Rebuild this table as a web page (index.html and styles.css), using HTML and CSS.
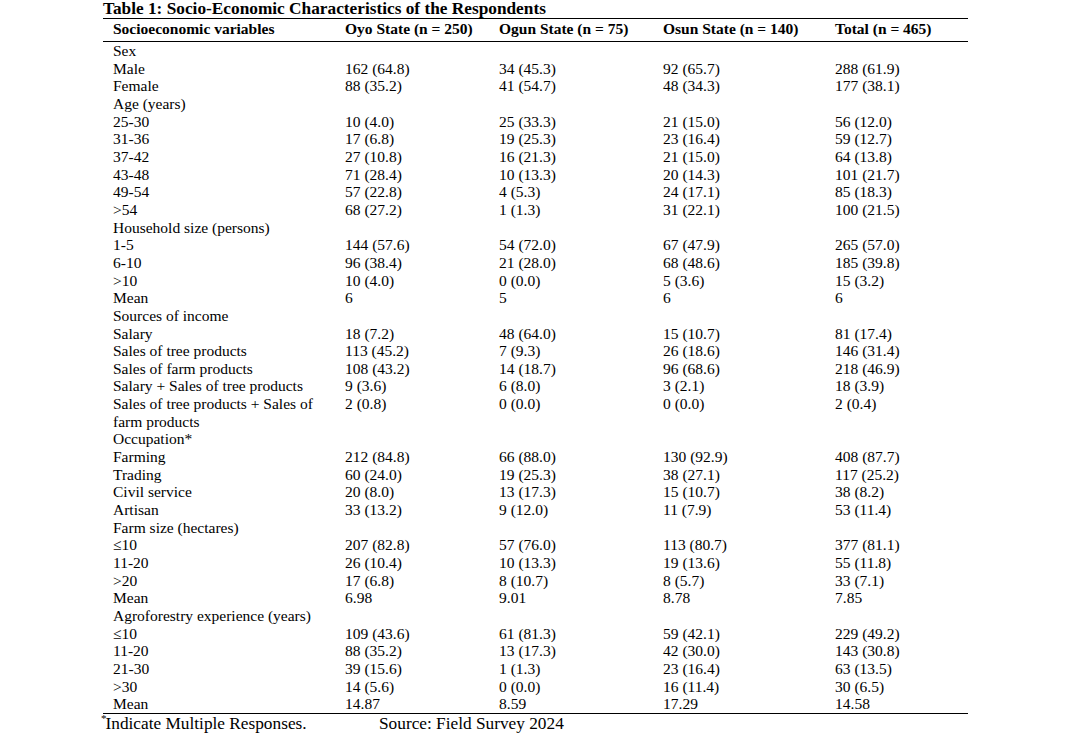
FILE: index.html
```
<!DOCTYPE html>
<html lang="en">
<head>
    <meta charset="UTF-8">
    <title>Table 1</title>
    <link rel="stylesheet" href="styles.css">
</head>
<body>
    <div class="sheet">
        <div class="caption">Table 1: Socio-Economic Characteristics of the Respondents</div>
        <table class="data">
            <thead>
                <tr>
                    <th class="c1">Socioeconomic variables</th>
                    <th class="c2">Oyo State (n = 250)</th>
                    <th class="c3">Ogun State (n = 75)</th>
                    <th class="c4">Osun State (n = 140)</th>
                    <th class="c5">Total (n = 465)</th>
                </tr>
            </thead>
            <tbody>
                <tr><td>Sex</td><td></td><td></td><td></td><td></td></tr>
                <tr><td>Male</td><td>162 (64.8)</td><td>34 (45.3)</td><td>92 (65.7)</td><td>288 (61.9)</td></tr>
                <tr><td>Female</td><td>88 (35.2)</td><td>41 (54.7)</td><td>48 (34.3)</td><td>177 (38.1)</td></tr>
                <tr><td>Age (years)</td><td></td><td></td><td></td><td></td></tr>
                <tr><td>25-30</td><td>10 (4.0)</td><td>25 (33.3)</td><td>21 (15.0)</td><td>56 (12.0)</td></tr>
                <tr><td>31-36</td><td>17 (6.8)</td><td>19 (25.3)</td><td>23 (16.4)</td><td>59 (12.7)</td></tr>
                <tr><td>37-42</td><td>27 (10.8)</td><td>16 (21.3)</td><td>21 (15.0)</td><td>64 (13.8)</td></tr>
                <tr><td>43-48</td><td>71 (28.4)</td><td>10 (13.3)</td><td>20 (14.3)</td><td>101 (21.7)</td></tr>
                <tr><td>49-54</td><td>57 (22.8)</td><td>4 (5.3)</td><td>24 (17.1)</td><td>85 (18.3)</td></tr>
                <tr><td>&gt;54</td><td>68 (27.2)</td><td>1 (1.3)</td><td>31 (22.1)</td><td>100 (21.5)</td></tr>
                <tr><td>Household size (persons)</td><td></td><td></td><td></td><td></td></tr>
                <tr><td>1-5</td><td>144 (57.6)</td><td>54 (72.0)</td><td>67 (47.9)</td><td>265 (57.0)</td></tr>
                <tr><td>6-10</td><td>96 (38.4)</td><td>21 (28.0)</td><td>68 (48.6)</td><td>185 (39.8)</td></tr>
                <tr><td>&gt;10</td><td>10 (4.0)</td><td>0 (0.0)</td><td>5 (3.6)</td><td>15 (3.2)</td></tr>
                <tr><td>Mean</td><td>6</td><td>5</td><td>6</td><td>6</td></tr>
                <tr><td>Sources of income</td><td></td><td></td><td></td><td></td></tr>
                <tr><td>Salary</td><td>18 (7.2)</td><td>48 (64.0)</td><td>15 (10.7)</td><td>81 (17.4)</td></tr>
                <tr><td>Sales of tree products</td><td>113 (45.2)</td><td>7 (9.3)</td><td>26 (18.6)</td><td>146 (31.4)</td></tr>
                <tr><td>Sales of farm products</td><td>108 (43.2)</td><td>14 (18.7)</td><td>96 (68.6)</td><td>218 (46.9)</td></tr>
                <tr><td>Salary + Sales of tree products</td><td>9 (3.6)</td><td>6 (8.0)</td><td>3 (2.1)</td><td>18 (3.9)</td></tr>
                <tr><td>Sales of tree products + Sales of farm products</td><td>2 (0.8)</td><td>0 (0.0)</td><td>0 (0.0)</td><td>2 (0.4)</td></tr>
                <tr><td>Occupation*</td><td></td><td></td><td></td><td></td></tr>
                <tr><td>Farming</td><td>212 (84.8)</td><td>66 (88.0)</td><td>130 (92.9)</td><td>408 (87.7)</td></tr>
                <tr><td>Trading</td><td>60 (24.0)</td><td>19 (25.3)</td><td>38 (27.1)</td><td>117 (25.2)</td></tr>
                <tr><td>Civil service</td><td>20 (8.0)</td><td>13 (17.3)</td><td>15 (10.7)</td><td>38 (8.2)</td></tr>
                <tr><td>Artisan</td><td>33 (13.2)</td><td>9 (12.0)</td><td>11 (7.9)</td><td>53 (11.4)</td></tr>
                <tr><td>Farm size (hectares)</td><td></td><td></td><td></td><td></td></tr>
                <tr><td>&le;10</td><td>207 (82.8)</td><td>57 (76.0)</td><td>113 (80.7)</td><td>377 (81.1)</td></tr>
                <tr><td>11-20</td><td>26 (10.4)</td><td>10 (13.3)</td><td>19 (13.6)</td><td>55 (11.8)</td></tr>
                <tr><td>&gt;20</td><td>17 (6.8)</td><td>8 (10.7)</td><td>8 (5.7)</td><td>33 (7.1)</td></tr>
                <tr><td>Mean</td><td>6.98</td><td>9.01</td><td>8.78</td><td>7.85</td></tr>
                <tr><td>Agroforestry experience (years)</td><td></td><td></td><td></td><td></td></tr>
                <tr><td>&le;10</td><td>109 (43.6)</td><td>61 (81.3)</td><td>59 (42.1)</td><td>229 (49.2)</td></tr>
                <tr><td>11-20</td><td>88 (35.2)</td><td>13 (17.3)</td><td>42 (30.0)</td><td>143 (30.8)</td></tr>
                <tr><td>21-30</td><td>39 (15.6)</td><td>1 (1.3)</td><td>23 (16.4)</td><td>63 (13.5)</td></tr>
                <tr><td>&gt;30</td><td>14 (5.6)</td><td>0 (0.0)</td><td>16 (11.4)</td><td>30 (6.5)</td></tr>
                <tr><td>Mean</td><td>14.87</td><td>8.59</td><td>17.29</td><td>14.58</td></tr>
            </tbody>
        </table>
        <div class="note">
            <span class="note-left"><sup>*</sup>Indicate Multiple Responses.</span>
            <span class="note-right">Source: Field Survey 2024</span>
        </div>
    </div>
</body>
</html>
```

FILE: styles.css
```
body {
    margin: 0;
    background: #fff;
    color: #000;
    font-family: "Liberation Serif", "Times New Roman", serif;
    font-size: 15.5px;
}
.sheet {
    width: 865px;
    margin-left: 103px;
}
.caption {
    font-weight: bold;
    font-size: 17.3px;
    line-height: 18px;
    border-bottom: 1px solid #000;
}
.data {
    width: 100%;
    border-collapse: collapse;
    table-layout: fixed;
}
.data th {
    font-weight: bold;
    text-align: left;
    padding: 1px 10px 3px 10px;
    line-height: 18px;
    border-bottom: 1px solid #000;
}
.data td {
    padding: 0 10px;
    line-height: 17.65px;
    vertical-align: top;
}
.data tbody tr:last-child td {
    border-bottom: 1px solid #000;
}
.c1 { width: 212px; }
.c2 { width: 134px; }
.c3 { width: 144px; }
.c4 { width: 152px; }
.c5 { width: 123px; }
.note {
    display: flex;
    font-size: 17.3px;
    line-height: 20px;
}
.note-left {
    width: 276px;
}
.note-left sup {
    font-size: 11px;
    line-height: 0;
    margin-left: -2px;
    margin-right: -1px;
}
```
